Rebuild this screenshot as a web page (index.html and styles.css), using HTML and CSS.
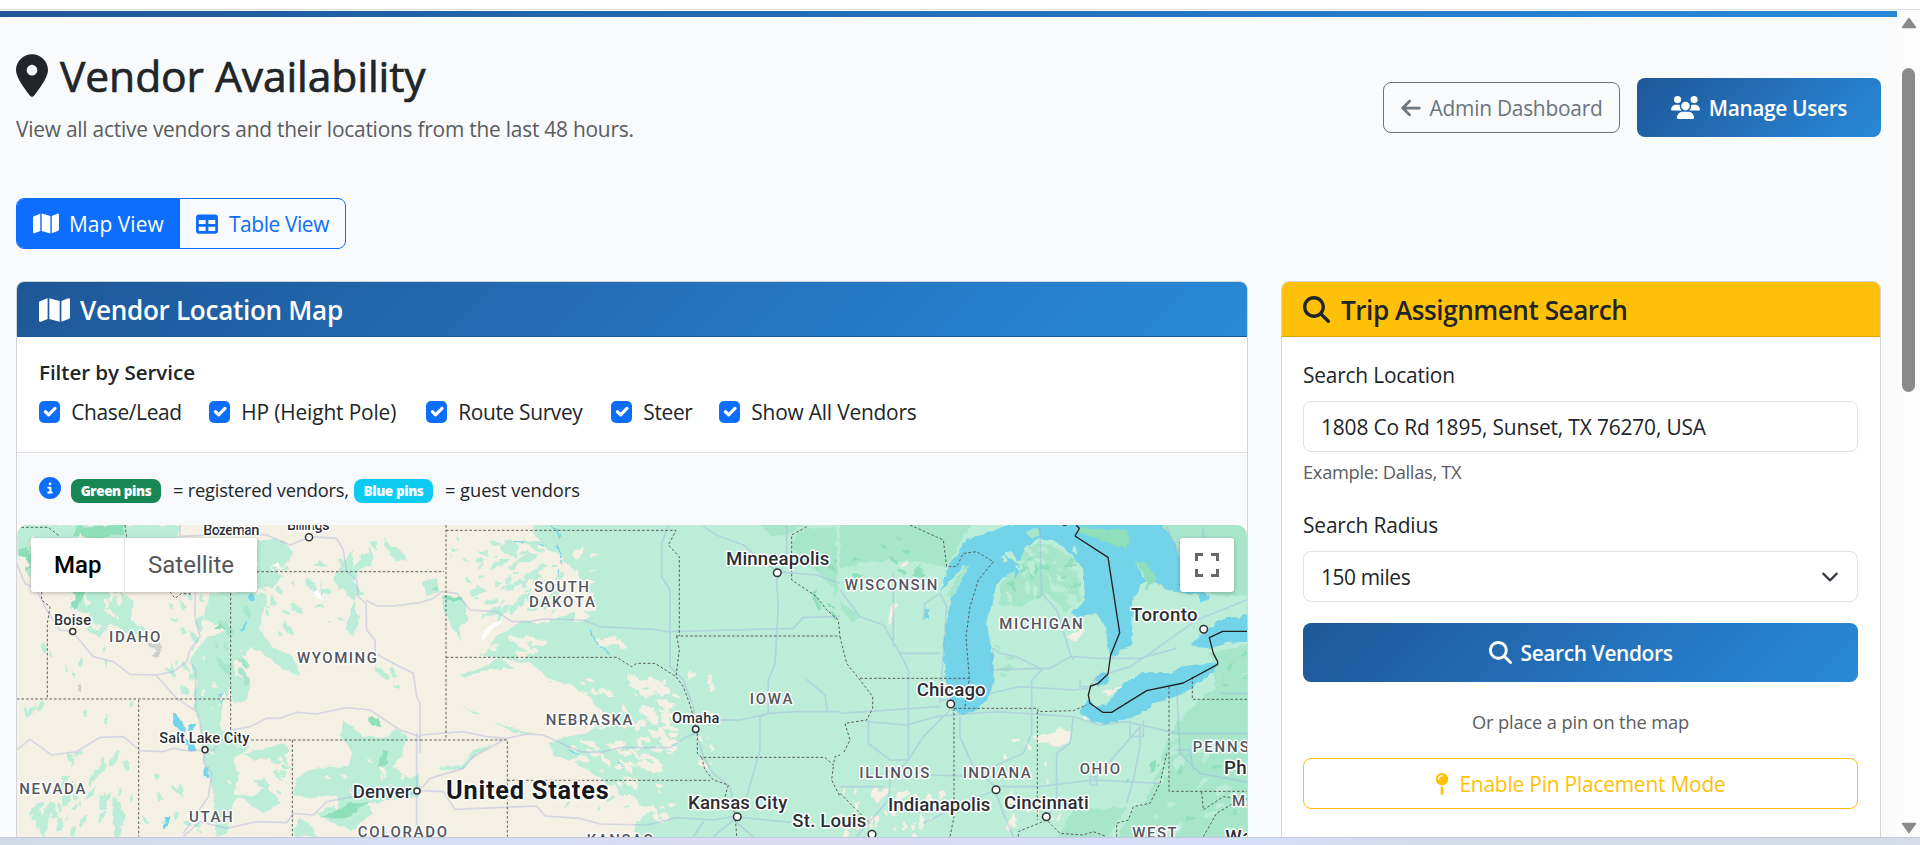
FILE: index.html
```html
<!DOCTYPE html>
<html lang="en">
<head>
<meta charset="utf-8">
<title>Vendor Availability</title>
<link rel="stylesheet" href="styles.css">
</head>
<body>
<svg class="defs" width="0" height="0">
  <symbol id="i-map" viewBox="0 0 576 512"><path d="M384 476.1L192 421.2V35.9L384 90.8V476.1zm32-1.2V88.4L543.1 37.5c15.8-6.3 32.9 5.3 32.9 22.3V394.6c0 9.8-6 18.6-15.1 22.3L416 474.8zM15.1 95.1L160 37.2V423.6L32.9 474.5C17.1 480.8 0 469.2 0 452.2V117.4c0-9.8 6-18.6 15.1-22.3z"/></symbol>
  <symbol id="i-search" viewBox="0 0 512 512"><path d="M416 208c0 45.9-14.9 88.3-40 122.7L502.6 457.4c12.5 12.5 12.5 32.8 0 45.3s-32.8 12.5-45.3 0L330.7 376c-34.4 25.2-76.8 40-122.7 40C93.1 416 0 322.9 0 208S93.1 0 208 0S416 93.1 416 208zM208 352a144 144 0 1 0 0-288 144 144 0 1 0 0 288z"/></symbol>
</svg>
<div class="window">
  <div class="topline"></div>
  <div class="viewport">
    <main class="page">
      <div class="brandbar"></div>
      <header class="head">
        <div>
          <h1><svg class="i-pin" viewBox="0 0 384 512"><path d="M215.7 499.2C267 435 384 279.4 384 192C384 86 298 0 192 0S0 86 0 192c0 87.4 117 243 168.3 307.2c12.3 15.3 35.1 15.3 47.4 0zM192 128a64 64 0 1 1 0 128 64 64 0 1 1 0-128z"/></svg><span>Vendor Availability</span></h1>
          <p class="lead">View all active vendors and their locations from the last 48 hours.</p>
        </div>
        <div class="actions">
          <a class="btn btn-grey"><svg class="i-arrow" viewBox="0 0 448 512"><path d="M9.4 233.4c-12.5 12.5-12.5 32.8 0 45.3l160 160c12.5 12.5 32.8 12.5 45.3 0s12.5-32.8 0-45.3L109.2 288 416 288c17.7 0 32-14.3 32-32s-14.3-32-32-32l-306.7 0L214.6 118.6c12.5-12.5 12.5-32.8 0-45.3s-32.8-12.5-45.3 0l-160 160z"/></svg><span>Admin Dashboard</span></a>
          <a class="btn btn-grad manage"><svg class="i-users" viewBox="0 0 640 512"><path d="M144 0a80 80 0 1 1 0 160A80 80 0 1 1 144 0zM512 0a80 80 0 1 1 0 160A80 80 0 1 1 512 0zM0 298.7C0 239.8 47.8 192 106.7 192h42.7c15.9 0 31 3.5 44.6 9.7c-1.3 7.2-1.9 14.7-1.9 22.3c0 38.2 16.8 72.5 43.3 96c-.2 0-.4 0-.7 0H21.3C9.6 320 0 310.4 0 298.7zM405.3 320c-.2 0-.4 0-.7 0c26.6-23.5 43.3-57.8 43.3-96c0-7.6-.7-15-1.9-22.3c13.6-6.3 28.7-9.7 44.6-9.7h42.7C592.2 192 640 239.8 640 298.7c0 11.8-9.6 21.3-21.3 21.3H405.3zM224 224a96 96 0 1 1 192 0 96 96 0 1 1 -192 0zM128 485.3C128 411.7 187.7 352 261.3 352H378.7C452.3 352 512 411.7 512 485.3c0 14.7-11.9 26.7-26.7 26.7H154.7c-14.7 0-26.7-11.9-26.7-26.7z"/></svg><span>Manage Users</span></a>
        </div>
      </header>
      <div class="toggle">
        <a class="tab on"><svg class="i-map" ><use href="#i-map"/></svg><span>Map View</span></a>
        <a class="tab"><svg class="i-table" viewBox="0 0 512 512"><path d="M64 256V160H224v96H64zm0 64H224v96H64V320zm224 96V320H448v96H288zM448 256H288V160H448v96zM64 32C28.7 32 0 60.7 0 96V416c0 35.3 28.7 64 64 64H448c35.3 0 64-28.7 64-64V96c0-35.3-28.7-64-64-64H64z"/></svg><span>Table View</span></a>
      </div>
      <div class="columns">
        <section class="card">
          <h2 class="card-head blue"><svg class="i-maplg"><use href="#i-map"/></svg><span>Vendor Location Map</span></h2>
          <div class="filters">
            <div class="filter-title">Filter by Service</div>
            <div class="checks">
              <label class="c1"><i class="box"><svg viewBox="0 0 20 20"><path d="m6 10 3 3 6-6"/></svg></i><span>Chase/Lead</span></label>
              <label class="c2"><i class="box"><svg viewBox="0 0 20 20"><path d="m6 10 3 3 6-6"/></svg></i><span>HP (Height Pole)</span></label>
              <label class="c3"><i class="box"><svg viewBox="0 0 20 20"><path d="m6 10 3 3 6-6"/></svg></i><span>Route Survey</span></label>
              <label class="c4"><i class="box"><svg viewBox="0 0 20 20"><path d="m6 10 3 3 6-6"/></svg></i><span>Steer</span></label>
              <label class="c5"><i class="box"><svg viewBox="0 0 20 20"><path d="m6 10 3 3 6-6"/></svg></i><span>Show All Vendors</span></label>
            </div>
          </div>
          <div class="legend">
            <svg class="i-info" viewBox="0 0 512 512"><path d="M256 512A256 256 0 1 0 256 0a256 256 0 1 0 0 512zM216 336h24V272H216c-13.3 0-24-10.7-24-24s10.7-24 24-24h48c13.3 0 24 10.7 24 24v88h8c13.3 0 24 10.7 24 24s-10.7 24-24 24H216c-13.3 0-24-10.7-24-24s10.7-24 24-24zm40-208a32 32 0 1 1 0 64 32 32 0 1 1 0-64z"/></svg>
            <span class="badge green">Green pins</span><span class="l1">= registered vendors,</span><span class="badge cyan">Blue pins</span><span class="l2">= guest vendors</span>
          </div>
          <div class="map">
            <svg class="mapsvg" viewBox="0 0 1230 312">
              <defs><filter id="rough" x="-5%" y="-5%" width="110%" height="110%"><feTurbulence type="fractalNoise" baseFrequency=".12" numOctaves="2" seed="4"/><feDisplacementMap in="SourceGraphic" scale="6" xChannelSelector="R" yChannelSelector="G"/></filter></defs>
              <rect width="1230" height="312" fill="#f5f0e4"/>
              <g filter="url(#rough)">
              <g id="west" transform="translate(-17 -5) scale(.33333)">
                <g class="g1">
                  <path d="M50 15H540L530 60 420 60 340 200 400 240 390 300 440 330 400 350 330 310 300 355 260 330 270 280 210 265 220 200 100 200 70 130 50 120Z"/>
                  <path d="M690 215H770L790 260 780 330 830 390 880 410 900 470 850 450 790 400 750 380 740 410 700 420 710 470 750 480 740 550 700 550 690 500 670 560 660 620 690 650 750 680 700 720 720 760 700 820 760 830 800 800 840 850 790 880 720 830 700 850 680 940 650 950 640 850 630 770 610 720 600 600 580 560 590 480 570 420 620 350 690 330 610 300 630 220Z"/>
                  <path d="M730 700 850 670 870 690 850 710 760 720Z"/>
                  <path d="M1030 600 1090 650 1160 650 1190 620 1220 650 1210 700 1180 740 1230 780 1260 760V830L1100 850 1120 880 1080 910 1050 930 980 900 950 880 1010 850 1000 830 880 830 890 770 960 740 1040 740 1060 700 1020 650Z"/>
                  <path d="M1030 120 1060 90 1060 140 1110 90 1120 125 1080 150 1060 180 1090 220 1060 240 1080 300 1060 350 1040 330 1060 240 1000 180Z"/>
                  <path d="M880 930 900 890 940 920 950 950H880ZM850 60 880 100 850 140 820 130 850 170 820 200 770 200V60Z"/>
                </g>
                <g class="g3">
                  <path d="M220 50 230 20 370 15 375 40 300 55ZM50 90 80 80 100 130 80 150ZM215 215H260L240 240 225 275 213 250ZM1105 590 1140 595 1140 620 1110 615ZM1150 690 1165 700 1160 735 1130 740ZM640 330 670 310 675 330ZM1050 890 1080 860 1110 850 1050 850 1000 880 960 890 1020 895Z"/>
                </g>
                <g class="grey"><path d="M430 370 480 370 487 390 475 412 452 405 468 395ZM233 490 243 492 243 514 234 514Z"/></g>
                <g class="white"><path d="M935 210 955 207 970 240 955 235ZM815 140 830 130 840 135 820 150Z"/></g>
                <g class="wat"><path d="M517 583 530 578 545 605 558 628 555 645 530 625 517 612ZM565 612 590 612 578 628 567 632ZM540 655 580 670 590 690 570 698 560 678ZM613 740 627 742 625 770 614 772ZM493 895 512 888 505 915 492 932ZM742 235 760 215 768 240 755 245ZM662 520 670 515 670 550 662 550ZM735 305 742 300 728 335 722 332ZM960 185 970 240 964 220Z"/></g>
              </g>
              <g id="mid" transform="translate(403 -5) scale(.33333)">
                <g class="g1">
                  <path d="M340 0H1300V990H640L650 900 710 870 640 850 560 790 500 750 400 700 385 670 440 650 500 640 560 600 520 540 460 500 380 470 330 430 180 405 230 350 310 300 350 310 420 290 530 270 480 180 430 110 380 90 340 40Z"/>
                  <path d="M65 230 130 230 145 300 120 320 130 365 100 330 70 270ZM5 185 50 175 60 215 20 225ZM120 465 180 445 240 412 280 445 200 450 140 470ZM60 740 130 735 160 690 215 672 150 720 130 748 70 750ZM120 555 180 580 175 585ZM220 605 310 635 350 640 400 655 350 640 290 640Z"/>
                </g>
                <g class="g2"><path d="M1130 30 1260 20V240L1200 160 1130 120 1115 80ZM1020 15H1150L1110 40 1060 50Z"/></g>
                <g class="g3"><path d="M65 230 125 230 130 245 110 240 80 240ZM35 205 50 195 52 215ZM1220 270 1260 290V310Z"/></g>
                <g class="river"><path d="M395 15 418 45 415 80 428 130M280 65 350 67 415 85M510 330 525 365 570 402M415 150V180M500 715 450 690M590 730 650 760M1180 240 1190 205"/></g>
              </g>
              <g id="east" transform="translate(823 -5) scale(.33333)">
                <rect x="-10" y="0" width="1260" height="1000" class="g1"/>
                <g class="g2">
                  <path d="M0 0H400L350 90 320 140 250 130 150 120 60 130 0 150ZM480 200 560 80 620 70 710 120 720 240 680 280 620 220 540 260 480 250ZM1000 620 1100 520 1260 440V990H820L860 900 940 800 960 720ZM960 0H1240V220L1130 230 1090 190 980 60ZM1110 400 1240 370V440L1130 520Z"/>
                  <path d="M700 870 860 860 800 960H650ZM0 240 60 290 40 310 0 270Z"/>
                </g>
                <g class="wat">
                  <path d="M1050 375 1085 340 1120 315 1160 295 1225 285 1260 280V365H1225L1150 370 1110 385 1060 380ZM715 575 745 535 760 560 800 555 820 530 850 490 910 455 990 460 1020 440 1135 425 1120 455 1050 510 970 540 910 575 860 600 800 612 740 600ZM770 470 790 452 808 475 800 498 770 492Z"/>
                  <path d="M300 215 330 130 380 60 470 30 560 0H960L1000 60 1050 190 1100 225 1000 215 950 190 915 150 885 125 915 180 880 230 875 370 820 410 808 400 795 320 770 280 730 290 690 285 735 240 730 150 690 100 640 60 600 55 560 80 540 120 530 180 520 150 470 190 460 240 440 300 450 370 462 420 460 500 430 550 400 580 350 582 330 540 318 480 308 380 330 250 345 200 380 130 340 170Z"/>
                  <path d="M1080 215 1110 225 1105 240 1080 248ZM254 265 268 262 266 300 254 300Z"/>
                </g>
                <g class="g2"><path d="M320 230 350 170 390 130 370 180 340 230ZM560 40 590 20 600 45 575 60Z"/></g>
                <g class="g3"><path d="M710 20 860 30 870 60 860 85 780 60 700 30ZM885 125 915 130 950 175 920 210 910 160ZM210 175 240 130 250 170ZM500 190 520 180 530 220ZM580 130 600 150 570 180Z"/></g>
                <g class="cream"><path d="M140 300 155 250 170 245 165 280 145 315ZM180 135 205 120 200 138 185 142ZM680 355 720 325 735 330 710 365ZM785 515 840 495 848 500 805 525ZM580 650 640 640 660 620 690 640 690 665 660 680 620 670 585 665ZM515 660 540 648 540 660 520 668ZM555 670 575 680 565 692ZM720 580 750 600 735 603Z"/></g>
              </g>
              </g>
              <g class="white" transform="translate(403 -5) scale(.33333)"><path d="M183 357 190 335 215 312 245 300 248 307 215 328 192 360Z"/></g>
              <g transform="translate(-17 -5) scale(.33333)">
                <g class="road"><path d="M50 130 75 190 110 210 140 270 180 330 218 335 280 410 340 425 390 463 470 465 520 455 560 425 570 390 600 350 585 290 585 215M570 425 587 450 587 570M470 468 530 535 590 575 600 610 610 690M540 15V50L690 40 800 45 870 75 930 50 1010 55 1030 90 1040 155 1070 180 1075 230 1098 250 1100 330 1125 360 1125 400 1190 435 1240 460 1250 530 1260 550M1098 240 1130 258 1180 258 1260 248M50 690 90 658 155 705 230 695 300 652 370 650 420 692 490 695 520 685 560 692 640 690 690 632 750 620 800 595 840 595 890 577 950 582 1040 563 1110 570 1200 630 1260 650M612 690 612 730 635 760 625 830 550 940M550 950 600 905 680 925 770 905 860 908 880 880 940 885 980 845 1060 830 1250 820M1250 640V950"/></g>
                <g class="border"><path d="M50 22H145L180 50M125 215V240L150 260 142 310V537M50 537H692V215M770 155H1260M692 537V640L750 660H1260M416 540V950M877 660V950M510 215 525 235 545 220 575 222M375 15 380 50"/></g>
              </g>
              <g transform="translate(403 -5) scale(.33333)">
                <g class="road"><path d="M0 248 40 235 65 215 110 220 150 270 230 275 275 305H330L370 297 490 300 540 320 700 328 740 335 940 330 1120 325 1150 292 1260 290M745 15 725 70V170L750 210V440L790 480 820 560 830 640 850 710 880 760 930 800 950 890M850 20 890 45 970 75 1070 155 1190 165 1260 190M1100 15V120L1070 180 1075 260 1065 430 1045 480V580L1020 590 1020 690 980 830M900 600 960 600 1050 580 1120 575H1260M1160 478 1215 525 1222 575M0 645 130 635 200 650 260 655 320 642 370 645 480 695 540 698 600 683H750L800 650 830 640M0 810 30 775 130 745 160 710 260 655M0 812 70 815 105 868 350 858 375 888 480 895 540 912 680 915 770 893 880 900 940 890 1120 908M820 950 850 905M880 950 940 900 1000 950M0 550V700"/></g>
                <g class="border"><path d="M78 15V660M78 31H768L745 75 778 110V348M768 348H1260M770 348 778 390 768 470M78 412H590L635 440 650 430H705L768 470 790 500 812 560 832 640 832 700 845 712H1215L1240 735 1245 710 1260 705M845 712 855 750 880 780 925 795 915 830 945 880 950 950M0 155H72M0 660H262V950M262 781H870M1160 20 1115 45 1115 180 1190 230 1220 270 1255 300 1260 350M1240 740 1235 780 1260 830"/></g>
              </g>
              <g transform="translate(823 -5) scale(.33333)">
                <g class="road"><path d="M0 210 60 290 130 315 180 400 205 450 205 720M160 160V380M180 400H300M300 220 320 260 310 400 300 550M300 220 255 250 250 300M600 20 605 220 650 270 690 400 700 420M460 385 480 400 530 410 600 445 630 445 690 410 780 415H900L1010 385M450 520 540 500 700 510 745 505M745 505 770 470 870 440 930 400 1000 350 1070 300 1220 240M460 385 450 450 610 445 575 480V640L550 700 460 740M80 605 200 615 290 590 340 585 470 575 700 590 780 615 860 605 1010 640H1240M0 580 300 560M85 600V670L150 720H205L250 650 330 570M205 720 150 780 145 840 50 950M360 590V650L400 740 465 800 600 800 760 780 960 790M270 765 460 770M465 810 490 880 520 950M465 810 330 870 250 910M700 590 690 670 650 700V850L620 890M760 780 840 690 900 620 900 680 880 780 860 850M1010 500 1020 700 1080 760 1240 790M1140 520 1240 520M720 480V500H760M980 20 1010 90 1070 100M1090 20V90M300 540 330 540 340 580M870 600V650H910V600M1000 690 1050 690 1060 750M0 800H130M750 770H770V795H750Z"/></g>
                <g class="border"><path d="M210 15 310 60 320 140H350L370 100 410 95 460 125 415 180 390 260 378 350 388 475 375 560M60 475H388M342 565H592L595 575 700 572 740 555M342 565V890L330 950M592 575V900M0 350 20 430 60 480 98 530 98 565 80 600 15 610 30 660 10 700M987 500V814H1240M1057 470V538H1240M980 700 960 790 930 850 880 860 865 900 830 910 830 950M535 950V935L620 900 660 940 730 945 760 935 800 950M0 820 50 870 90 910M1085 815 1090 870 1150 830 1240 840M1090 950 1130 880 1180 850"/></g>
                <g class="intl"><path d="M668 15H680M708 15 718 25 705 48 804 112 839 338 812 405 804 462 775 490 752 498 745 525 750 550 788 577H815L920 512 1030 489 1133 433V425L1120 400 1108 353 1148 334H1230"/></g>
              </g>
              <g class="labels" transform="translate(-17 -5) scale(.33333)">
                <text class="town" x="610" y="46" textLength="168">Bozeman</text><text class="town" x="861" y="30" textLength="128">Billings</text>
                <text class="town" x="162" y="315" textLength="111">Boise</text><text class="state" x="327" y="365" textLength="154">IDAHO</text>
                <text class="state" x="891" y="428" textLength="240">WYOMING</text><text class="town" x="478" y="669" textLength="270">Salt Lake City</text>
                <text class="state" x="58" y="823" textLength="198">NEVADA</text><text class="state" x="567" y="906" textLength="131">UTAH</text>
                <text class="city" x="1058" y="833" textLength="176">Denver</text><text class="state" x="1073" y="952" textLength="268">COLORADO</text>
              </g>
              <g class="labels" transform="translate(403 -5) scale(.33333)">
                <text class="state" x="342" y="215" textLength="165">SOUTH</text><text class="state" x="327" y="260" textLength="198">DAKOTA</text>
                <text class="city" x="918" y="134" textLength="310">Minneapolis</text><text class="state" x="377" y="616" textLength="260">NEBRASKA</text>
                <text class="town" x="756" y="608" textLength="142">Omaha</text><text class="state" x="989" y="553" textLength="128">IOWA</text>
                <text class="country" x="78" y="837" textLength="488">United States</text><text class="city" x="804" y="866" textLength="298">Kansas City</text>
                <text class="city" x="1117" y="921" textLength="222">St. Louis</text><text class="state" x="500" y="976" textLength="198">KANSAS</text>
              </g>
              <g class="labels" transform="translate(823 -5) scale(.33333)">
                <text class="state" x="14" y="209" textLength="278">WISCONSIN</text><text class="state" x="478" y="326" textLength="250">MICHIGAN</text>
                <text class="city" x="873" y="304" textLength="200">Toronto</text><text class="city" x="230" y="527" textLength="207">Chicago</text>
                <text class="state" x="58" y="774" textLength="210">ILLINOIS</text><text class="state" x="368" y="774" textLength="204">INDIANA</text>
                <text class="state" x="719" y="762" textLength="121">OHIO</text><text class="city" x="144" y="874" textLength="307">Indianapolis</text>
                <text class="city" x="492" y="866" textLength="254">Cincinnati</text><text class="state" x="1058" y="695" textLength="388">PENNSYLVANIA</text>
                <text class="city" x="1152" y="762" textLength="320">Philadelphia</text><text class="state" x="1176" y="858" textLength="260">MARYLAND</text>
                <text class="state" x="877" y="953" textLength="133">WEST</text><text class="city" x="1156" y="968" textLength="320">Washington</text>
              </g>
              <g class="dots">
                <circle cx="292" cy="12.3" r="3.5"/><circle cx="55.7" cy="106.5" r="3"/><circle cx="188" cy="224.7" r="3"/><circle cx="400" cy="266" r="3"/>
                <circle cx="760.3" cy="47.7" r="3.8"/><circle cx="678.7" cy="204.3" r="3.2"/><circle cx="720.3" cy="291.7" r="3.8"/>
                <circle cx="1186.7" cy="104.3" r="3.8"/><circle cx="933.7" cy="179" r="3.8"/><circle cx="979" cy="264.7" r="3.8"/><circle cx="1029.3" cy="291.7" r="3.8"/><circle cx="855" cy="309.3" r="3.8"/>
              </g>
            </svg>
            <div class="maptype"><span class="active">Map</span><span>Satellite</span></div>
            <div class="full"><svg viewBox="0 0 24 24"><path d="M0 0h8v3H3v5H0zM16 0h8v8h-3V3h-5zM0 16h3v5h5v3H0zM21 16h3v8h-8v-3h5z"/></svg></div>
          </div>
        </section>
        <section class="card side">
          <h2 class="card-head yellow"><svg class="i-searchlg"><use href="#i-search"/></svg><span>Trip Assignment Search</span></h2>
          <div class="form">
            <div class="label">Search Location</div>
            <div class="control addr"><span>1808 Co Rd 1895, Sunset, TX 76270, USA</span></div>
            <div class="hint">Example: Dallas, TX</div>
            <div class="label radius">Search Radius</div>
            <div class="control"><span>150 miles</span><svg class="chev" viewBox="0 0 16 16"><path d="m2 5 6 6 6-6"/></svg></div>
            <a class="btn btn-grad search"><svg class="i-search"><use href="#i-search"/></svg><span>Search Vendors</span></a>
            <div class="or">Or place a pin on the map</div>
            <a class="btn btn-yellow"><svg class="i-mappin" viewBox="0 0 320 512"><path d="M16 144a144 144 0 1 1 288 0A144 144 0 1 1 16 144zM160 80c8.8 0 16-7.2 16-16s-7.2-16-16-16c-53 0-96 43-96 96c0 8.8 7.2 16 16 16s16-7.2 16-16c0-35.3 28.7-64 64-64zM128 480V317.1c10.4 1.9 21.1 2.9 32 2.9s21.6-1 32-2.9V480c0 17.7-14.3 32-32 32s-32-14.3-32-32z"/></svg><span>Enable Pin Placement Mode</span></a>
          </div>
        </section>
      </div>
    </main>
    <aside class="scroll"><svg class="arrow" viewBox="0 0 16 12"><path d="M8 1.5 14.5 10.500h-13z"/></svg><div class="thumb"></div><svg class="arrow down" viewBox="0 0 16 12"><path d="M8 10.500 14.500 1.500h-13z"/></svg></aside>
  </div>
  <div class="taskbar"></div>
</div>
<script src="terrain.js"></script>
</body>
</html>
```
FILE: terrain.js
```js
// Scatters small irregular vegetation and bare-ground patches over the map.
let seed = 7;
function rnd() {
  seed = (seed * 1664525 + 1013904223) % 4294967296;
  return seed / 4294967296;
}

function scatter(id, x, y, w, h, count, size, kind, angle) {
  let d = "";
  for (let i = 0; i < count; i++) {
    const cx = x + rnd() * w, cy = y + rnd() * h;
    const r = size * (0.35 + rnd());
    const a = angle + (rnd() - 0.5) * 1.2;
    for (let k = 0; k < 7; k++) {
      const t = k / 7 * Math.PI * 2;
      const px = Math.cos(t) * r * (0.6 + rnd() * 0.8);
      const py = Math.sin(t) * r * (0.2 + rnd() * 0.45);
      const qx = cx + px * Math.cos(a) - py * Math.sin(a);
      const qy = cy + px * Math.sin(a) + py * Math.cos(a);
      d += (k ? "L" : "M") + qx.toFixed(0) + " " + qy.toFixed(0);
    }
    d += "Z";
  }
  const p = document.createElementNS("http://www.w3.org/2000/svg", "path");
  p.setAttribute("d", d);
  p.setAttribute("class", kind);
  document.getElementById(id).appendChild(p);
}

scatter("west", 60, 60, 330, 200, 26, 26, "cream", 1);
scatter("west", 250, 220, 260, 110, 12, 17, "cream", 1);
scatter("west", 510, 220, 120, 300, 22, 18, "g1", 1.3);
scatter("west", 60, 330, 300, 200, 8, 20, "g1", 1.5);
scatter("west", 70, 550, 420, 70, 6, 20, "g1", 1.7);
scatter("west", 180, 700, 220, 240, 34, 22, "g1", 1.9);
scatter("west", 80, 840, 100, 100, 14, 24, "g1", 1.9);
scatter("west", 430, 740, 180, 200, 10, 18, "g1", 1);
scatter("west", 780, 100, 110, 260, 22, 18, "g1", 0.6);
scatter("west", 900, 130, 130, 220, 8, 18, "g1", 0.5);
scatter("west", 1080, 70, 120, 60, 8, 24, "g1", 1.2);
scatter("west", 1110, 420, 110, 130, 6, 18, "g1", 0.6);
scatter("west", 750, 680, 130, 160, 10, 20, "g1", 0.7);
scatter("west", 590, 360, 160, 560, 24, 11, "cream", 1.4);
scatter("west", 920, 720, 300, 200, 22, 14, "cream", 0.7);
scatter("west", 640, 230, 120, 260, 10, 22, "g2", 1);
scatter("mid", 180, 60, 260, 70, 22, 20, "g1", 0.3);
scatter("mid", 170, 120, 250, 170, 46, 19, "g1", 2.5);
scatter("mid", 350, 80, 170, 220, 38, 19, "cream", 2.5);
scatter("mid", 180, 370, 200, 36, 8, 18, "cream", 2.9);
scatter("mid", 270, 345, 90, 30, 5, 18, "cream", 2.9);
scatter("mid", 540, 340, 80, 50, 5, 22, "cream", 0.3);
scatter("mid", 380, 440, 250, 60, 12, 16, "g1", 0.5);
scatter("mid", 460, 480, 200, 140, 26, 18, "cream", 0.4);
scatter("mid", 640, 470, 140, 200, 44, 20, "cream", 0.5);
scatter("mid", 390, 660, 370, 110, 36, 21, "cream", 0.4);
scatter("mid", 580, 770, 180, 150, 24, 18, "cream", 0.6);
scatter("mid", 400, 790, 230, 90, 10, 15, "g1", 2.8);
scatter("mid", 800, 460, 80, 300, 12, 13, "cream", 1.4);
scatter("mid", 90, 40, 130, 150, 6, 14, "g1", 0.5);
scatter("mid", 1130, 70, 130, 200, 9, 15, "g3", 0.8);
scatter("east", 480, 90, 230, 170, 28, 17, "g1", 0.8);
scatter("east", 540, 90, 170, 170, 9, 12, "g3", 2.5);
scatter("east", 20, 40, 260, 130, 9, 16, "g3", 0.2);
scatter("east", 0, 800, 330, 150, 36, 16, "cream", 2);
scatter("east", 480, 700, 180, 220, 14, 14, "cream", 2);
scatter("east", 880, 620, 340, 320, 30, 20, "g1", 2.4);
scatter("east", 860, 640, 360, 300, 10, 14, "g3", 2.4);
scatter("east", 1120, 380, 110, 120, 5, 13, "g3", 2.6);
scatter("east", 460, 380, 60, 90, 6, 16, "g2", 0.5);
```
FILE: styles.css
```css
* { box-sizing: border-box; }
body { margin: 0; font-family: "Open Sans", "Noto Sans", sans-serif; font-size: 20.9px; line-height: 32px; color: #212529; background: #f8fafc; }
svg { flex: none; fill: currentColor; display: block; }
span { white-space: nowrap; }
.defs { position: absolute; }
.window { height: 845px; overflow: hidden; display: flex; flex-direction: column; }
.topline { height: 11px; flex: none; background: #fff; border-bottom: 1px solid #fff; box-shadow: inset 0 -1px #dcdfe1; }
.viewport { flex: 1; min-height: 0; display: flex; }
.page { width: 1897px; overflow: hidden; }
.brandbar { height: 6px; background: linear-gradient(90deg, #1e5799, #2989d8); }
.head { display: flex; justify-content: space-between; height: 181px; padding: 31px 16px 0; }
h1 { display: flex; align-items: center; gap: 12px; margin: 0; height: 55px; font-size: 42.6px; font-weight: 500; line-height: 55px; letter-spacing: -.1px; -webkit-text-stroke: .7px #212529; }
.i-pin { width: 32px; height: 43px; }
.lead { margin: 10px 0 0; color: #5a5c60; letter-spacing: -.23px; white-space: nowrap; }
.actions { display: flex; align-items: center; gap: 17px; height: 59px; margin-top: 30px; }
.btn { display: flex; align-items: center; justify-content: center; border-radius: 8px; height: 51px; border: 1px solid; }
.btn-grey { width: 237px; color: #6c757d; gap: 9px; letter-spacing: -.25px; }
.i-arrow { width: 20px; height: 22px; }
.btn-grad { height: 59px; border: 0; color: #fff; font-weight: 600; background: linear-gradient(135deg, #1e5799, #2989d8); letter-spacing: -.36px; }
.manage { width: 244px; gap: 9px; }
.i-users { width: 29px; height: 23px; }
.toggle { display: flex; width: 330px; height: 51px; margin-left: 16px; border: 1px solid #0d6efd; border-radius: 8px; overflow: hidden; }
.tab { display: flex; align-items: center; padding-left: 16px; gap: 11px; color: #0d6efd; letter-spacing: -.4px; }
.tab.on { width: 163px; padding-left: 16px; gap: 10px; color: #fff; background: #0d6efd; letter-spacing: .05px; }
.i-map { width: 26px; height: 23px; }
.i-table { width: 22px; height: 22px; }
.columns { display: grid; grid-template-columns: 1232px 600px; gap: 33px; padding: 32px 16px 0; height: 600px; }
.card { border: 1px solid #d3d6d9; border-radius: 8px; background: #fff; overflow: hidden; }
.card-head { display: flex; align-items: center; gap: 10px; margin: 0; height: 55px; padding: 1px 0 0 22px; font-size: 26.1px; font-weight: 600; border-bottom: 1px solid; letter-spacing: -.3px; }
.card-head.blue { color: #fff; border-color: #1a5b9c; background: linear-gradient(135deg, #1e5799, #2989d8); }
.card-head.yellow { background: #ffc107; border-color: #d9a406; letter-spacing: -.45px; padding-left: 21px; gap: 11px; }
.i-maplg { width: 31px; height: 28px; }
.i-searchlg { width: 27px; height: 27px; }
.filters { height: 116px; padding: 19px 22px 0; border-bottom: 1px solid #dee2e6; }
.filter-title { font-weight: 600; font-size: 20.6px; letter-spacing: -.05px; }
.checks { display: flex; padding-top: 8px; letter-spacing: -.35px; }
.checks label { display: flex; align-items: center; gap: 11px; }
.c1 { width: 170px; } .c2 { width: 217px; letter-spacing: -.15px; } .c3 { width: 185px; } .c4 { width: 108px; } .c5 { letter-spacing: -.2px; }
.box { width: 21.3px; height: 21.3px; border-radius: 5px; background: #0d6efd; }
.box svg { fill: none; stroke: #fff; stroke-width: 3; stroke-linecap: round; stroke-linejoin: round; }
.legend { display: flex; align-items: flex-start; height: 72px; padding: 24px 22px 0; background: #f8f9fb; font-size: 18.3px; letter-spacing: -.22px; }
.i-info { width: 22px; height: 22px; color: #0d6efd; margin-right: 10px; }
.badge { height: 24px; margin-top: 2px; border-radius: 8px; color: #fff; font-size: 13.5px; font-weight: 800; line-height: 24px; text-align: center; letter-spacing: -.4px; }
.green { width: 90px; background: #198754; }
.cyan { width: 79px; background: #0dcaf0; }
.l1 { margin-left: 12px; width: 181px; line-height: 25px; }
.l2 { margin-left: 12px; line-height: 25px; letter-spacing: -.05px; }
.map { position: relative; height: 330px; overflow: hidden; border-radius: 10px 10px 0 0; }
.mapsvg { width: 1230px; height: 312px; overflow: hidden; }
.g1 { fill: #bcedd8; } .g2 { fill: #a8e6cc; } .g3 { fill: #90dfbb; } .wat { fill: #72d3e9; } .cream { fill: #f5f0e4; } .grey { fill: #cdd1cb; } .white { fill: #fff; }
#rough { color-interpolation-filters: sRGB; }
.river { fill: none; stroke: #5fcdea; stroke-width: 3; }
.road { fill: none; stroke: #9aa8e0; stroke-opacity: .36; stroke-width: 5; stroke-linejoin: round; }
.border { fill: none; stroke: #555; stroke-width: 2.8; stroke-dasharray: 8 6; }
.intl { fill: none; stroke: #222; stroke-width: 4; stroke-linejoin: round; }
.labels { font-family: Roboto, sans-serif; paint-order: stroke; stroke: #fff; stroke-width: 9px; stroke-linejoin: round; fill: #2b2e33; }
.state { font-size: 45px; font-weight: 500; fill: #54565d; }
.town { font-size: 44px; font-weight: 500; }
.city { font-size: 56px; font-weight: 500; }
.country { font-size: 76px; font-weight: 700; fill: #17181c; }
.dots { fill: #fff; stroke: #333; stroke-width: 1.5; }
.maptype { position: absolute; left: 14px; top: 13px; display: flex; height: 54px; background: #fff; border-radius: 3px; box-shadow: 0 1px 4px rgba(0,0,0,.25); font: 24px/55px Roboto, sans-serif; color: #565656; }
.maptype span { padding: 0 23px; width: 132px; }
.maptype .active { width: 94px; font-weight: 500; color: #000; border-right: 1px solid #e6e6e6; }
.full { position: absolute; left: 1163px; top: 13px; width: 54px; height: 54px; padding: 15px; background: #fff; border-radius: 3px; box-shadow: 0 1px 4px rgba(0,0,0,.25); color: #666; }
.form { padding: 22px 22px 0 21px; }
.label { letter-spacing: -.2px; }
.control { display: flex; align-items: center; justify-content: space-between; height: 51px; margin-top: 10px; padding: 1px 18px 0 17px; border: 1px solid #dee2e6; border-radius: 8px; letter-spacing: -.4px; }
.addr { letter-spacing: -.15px; }
.chev { width: 18px; height: 18px; fill: none; stroke: #343a40; stroke-width: 1.9; stroke-linecap: round; stroke-linejoin: round; }
.hint { margin-top: 4px; font-size: 18.3px; color: #5a5c60; letter-spacing: -.3px; }
.radius { margin-top: 21px; letter-spacing: -.15px; }
.search { margin-top: 21px; gap: 9px; }
.i-search { width: 23px; height: 23px; }
.or { margin: 24px 0 20px; font-size: 18.3px; text-align: center; color: #5a5c60; letter-spacing: -.15px; }
.btn-yellow { color: #ffc107; gap: 10px; letter-spacing: -.2px; }
.i-mappin { width: 14px; height: 22px; }
.scroll { width: 23px; background: #fcfcfc; display: flex; flex-direction: column; align-items: center; padding: 6px 0 3px; }
.arrow { width: 16px; height: 12px; color: #8a8a8a; stroke: #8a8a8a; stroke-width: 1.5; stroke-linejoin: round; }
.down { margin-top: auto; }
.thumb { width: 13px; height: 324px; margin-top: 39px; border-radius: 7px; background: #8a8a8a; }
.taskbar { height: 8px; flex: none; border-top: 1px solid #c5cbdc; background: linear-gradient(90deg, #d2d9e6, #d5dff6 22%, #dcdaf2 40%, #d5dff8 65%, #d3dae8 76%, #d5dce8); }
```
